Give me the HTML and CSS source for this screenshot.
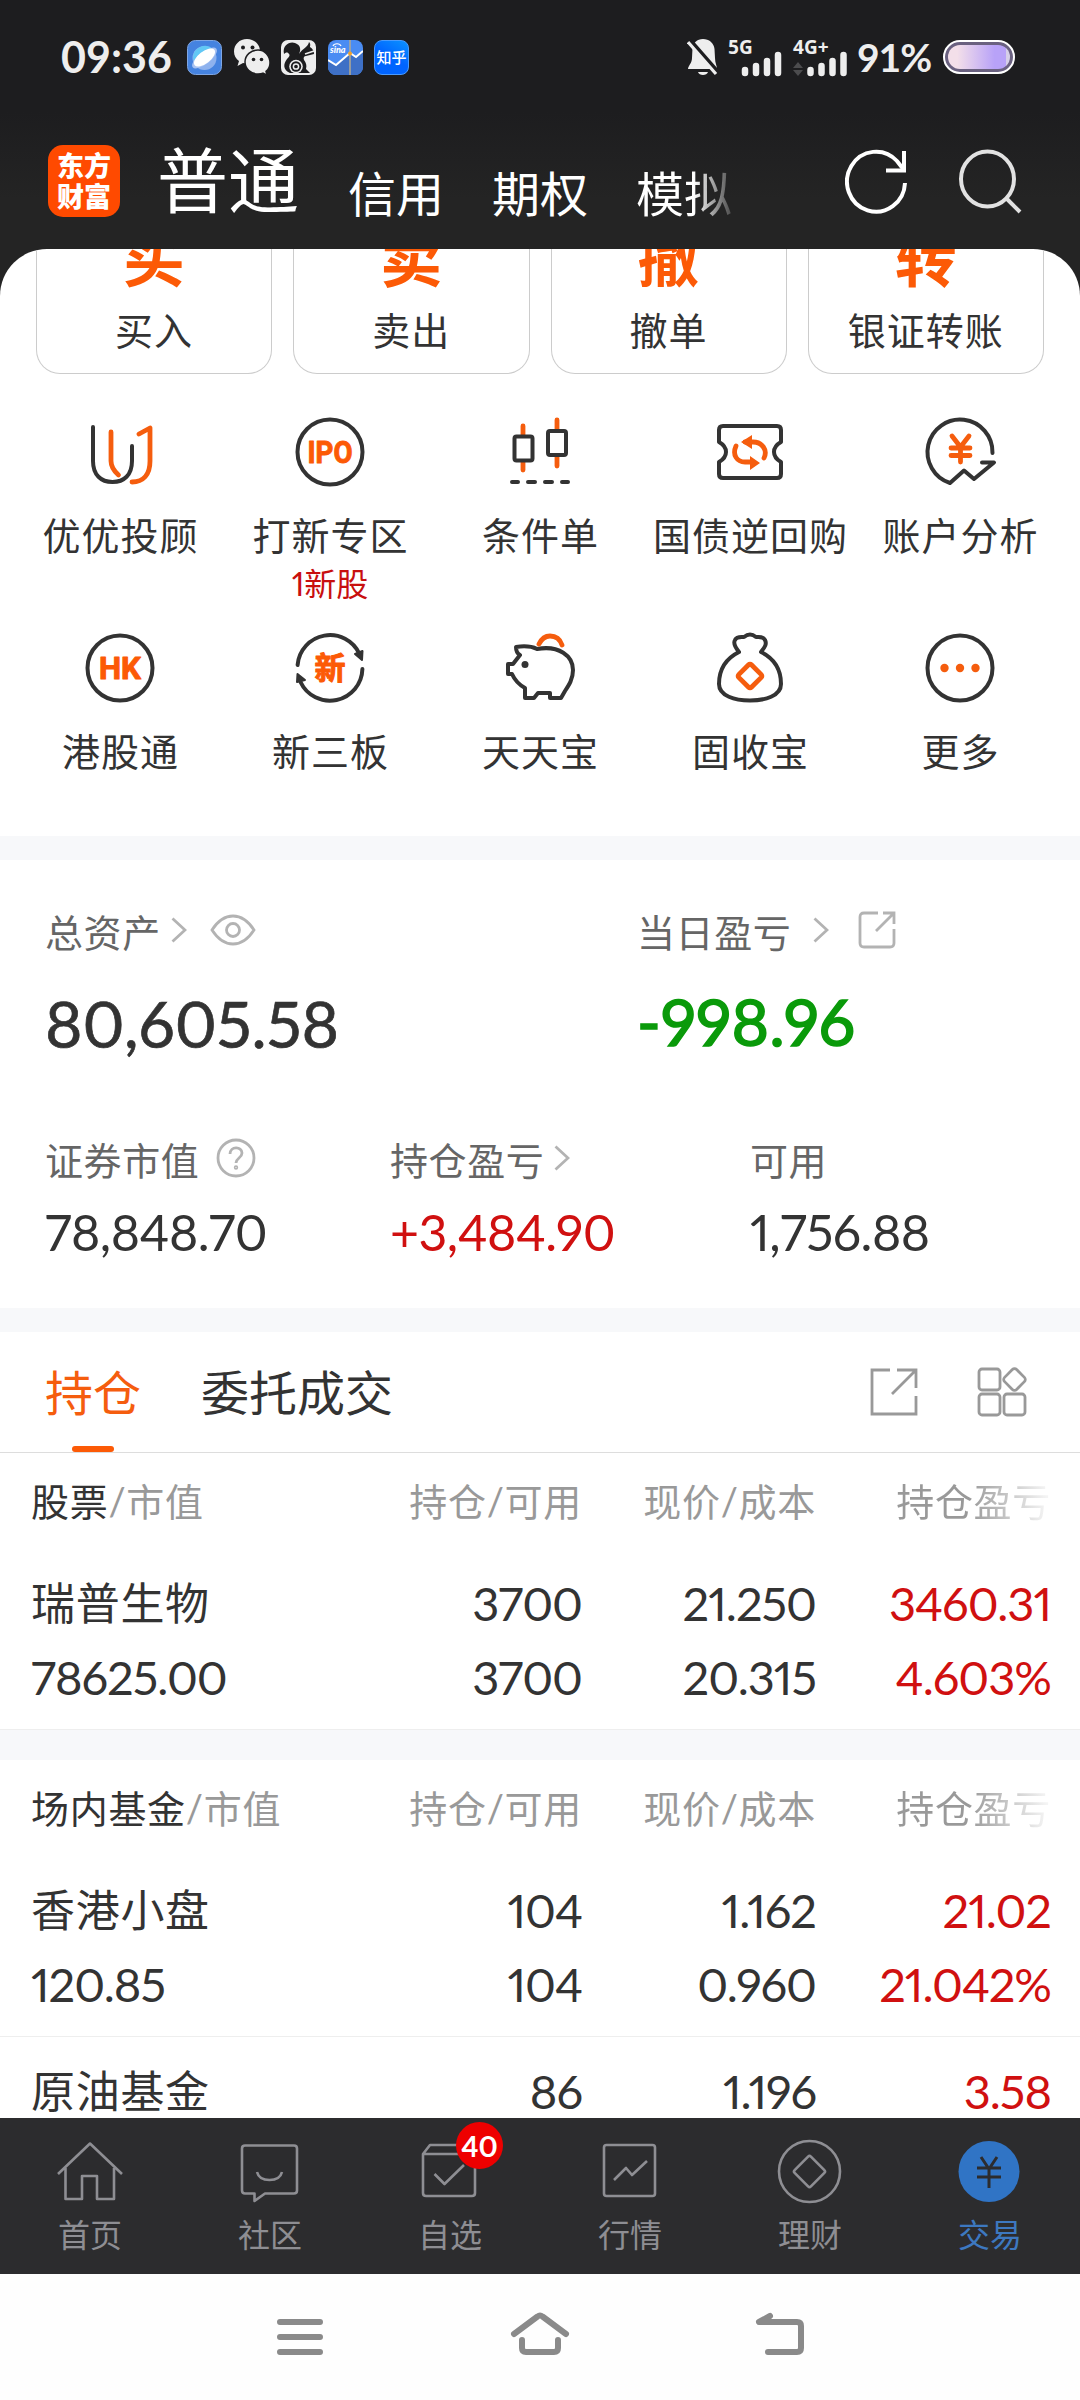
FILE: index.html
```
<!DOCTYPE html>
<html lang="zh-CN">
<head>
    <meta charset="UTF-8">
    <meta name="viewport" content="width=device-width, initial-scale=1.0">
    <title>交易 - 普通</title>
    <link rel="stylesheet" href="styles.css">
</head>
<body>
    <div class="phone">
        <header class="top">
            <div class="status">
                <span class="time">09:36</span>
                <div class="apps">
                    <svg width="35" height="35" viewBox="0 0 35 35">
                        <rect x=".5" y=".5" width="34" height="34" rx="8" fill="#4583e0" stroke="#7fa6e3"/>
                        <circle cx="17.5" cy="18" r="12" fill="#8eb2ee"/>
                        <path d="M6 18a12 12 0 0 1 20-9L8 25z" fill="#62c8f5"/>
                        <ellipse cx="17.5" cy="18" rx="15" ry="6" transform="rotate(-38 17.5 18)" fill="#a9c3f2"/>
                        <ellipse cx="17.5" cy="17.5" rx="12.5" ry="6" transform="rotate(-38 17.5 17.5)" fill="#fff"/>
                    </svg>
                    <svg width="36" height="36" viewBox="0 0 36 36">
                        <path d="M13 0C5.500 0 0 5.500 0 12.500c0 4 2 7.500 5 9.500l-1.500 5 5.500-3c8 2 17-3 17-11.500C26 5.500 20.500 0 13 0z" fill="#eee"/>
                        <path d="M24 11c-7 0-13 5-13 12s6 12 13 12c2 0 3.500 0 5-.8l4 2-1-3.800c2.500-2 4-5 4-8.400C36 16.500 30.500 11 24 11z" fill="#eee" stroke="#1d1d1f" stroke-width="1.500"/>
                        <g fill="#1d1d1f"><circle cx="9" cy="8.500" r="2"/><circle cx="18.500" cy="8.500" r="2"/><circle cx="19.500" cy="20.500" r="1.800"/><circle cx="27.500" cy="20.500" r="1.800"/></g>
                    </svg>
                    <svg width="35" height="35" viewBox="0 0 35 35">
                        <rect width="35" height="35" rx="7" fill="#eee"/>
                        <path d="M3 14C1 5 9 1 14 3c6 2 6 7 4 11 4-6 9-7 10-12 2 2 1 4 1 5 3 2 4 4 4 7l-8 2c-2 0-3 2-2 4 2 3 3 5 2 9l4 4H9C2 30 2 24 6 19c2-2 4-4 1-6-1-1-3 0-4 1z" fill="#1d1d1f"/>
                        <circle cx="15" cy="26.500" r="6.800" fill="#eee"/>
                        <circle cx="15" cy="26.500" r="5.200" fill="#1d1d1f"/>
                        <circle cx="15" cy="26.500" r="2.600" fill="none" stroke="#eee" stroke-width="1.500"/>
                        <path d="M24 14l9-3" fill="none" stroke="#eee" stroke-width="1.500"/>
                    </svg>
                    <svg width="35" height="35" viewBox="0 0 35 35">
                        <rect width="35" height="35" rx="8" fill="#4a8cf3"/>
                        <path d="M0 20l8 5L22 13l6 4 7-6v16a8 8 0 0 1-8 8H8a8 8 0 0 1-8-8z" fill="#3e70c6"/>
                        <path d="M0 20l8 5L22 13l6 4 7-6" fill="none" stroke="#fff" stroke-width="2"/>
                        <path d="M22 0v35" stroke="#b5aa91" stroke-width="1.500"/>
                        <circle cx="22" cy="13.500" r="2" fill="#f0a12c"/>
                        <path d="M5 6c1-3 7-3 8 0" fill="none" stroke="#fff" stroke-width="1.200"/>
                        <text x="2" y="13" class="sina">sina</text>
                    </svg>
                    <span class="zhihu">知乎</span>
                </div>
                <div class="signals">
                    <svg width="31" height="37" viewBox="0 0 31 37">
                        <path d="M16 0C10 0 6 4 5.500 9L5 19c0 5-4 8-4 11h29c0-3-2-6-2-11l-.5-9C27 4 22 0 16 0zM11 33h10c-1 4-9 4-10 0z" fill="#eee"/>
                        <path d="M3 1l28 32" stroke="#1d1d1f" stroke-width="4"/>
                        <path d="M1 3l28 32" stroke="#eee" stroke-width="3.200"/>
                    </svg>
                    <svg class="sig" width="55" height="41" viewBox="0 -4 55 41">
                        <text x="0" y="15" class="net">5G</text>
                        <path d="M17 31v3M28 27v7M39 22v12M50 16v18" stroke="#eee" stroke-width="6.500" stroke-linecap="round"/>
                    </svg>
                    <svg class="sig" width="55" height="41" viewBox="0 -4 55 41">
                        <text x="0" y="15" class="net">4G+</text>
                        <path d="M0 29l5-6 5 6zM0 31l5 6 5-6z" fill="#4c4c4e"/>
                        <path d="M17.500 31v3M28.500 27v7M39.500 22v12M50.500 16v18" stroke="#eee" stroke-width="6.500" stroke-linecap="round"/>
                    </svg>
                    <span class="percent">91%</span>
                    <div class="battery"><div class="level"></div></div>
                </div>
            </div>
            <nav class="accounts">
                <div class="logo">东方<br>财富</div>
                <div class="account-tabs">
                    <span class="current">普通</span>
                    <span>信用</span>
                    <span>期权</span>
                    <span class="fading">模拟</span>
                </div>
                <svg class="refresh" width="64" height="66" viewBox="0 0 64 66" fill="none" stroke="#fff" stroke-width="4">
                    <path d="M60 35a29 30 0 1 1-8-22l7 9"/>
                    <path d="M59 3v19.500H41"/>
                </svg>
                <svg width="64" height="66" viewBox="0 0 64 66" fill="none" stroke="#e2e2e2" stroke-width="4">
                    <ellipse cx="29.500" cy="31" rx="26.500" ry="27.500"/>
                    <path d="M48 50l14 14"/>
                </svg>
            </nav>
        </header>

        <main class="content">
            <section class="cards">
                <div class="card"><b>买</b><span>买入</span></div>
                <div class="card"><b>卖</b><span>卖出</span></div>
                <div class="card"><b>撤</b><span>撤单</span></div>
                <div class="card"><b>转</b><span>银证转账</span></div>
            </section>

            <section class="menu">
                <div class="menu-item">
                    <svg class="icon" viewBox="0 0 80 80">
                        <path d="M13 15v34c0 14 8 21 19.500 21S52 63 52 49V34"/>
                        <path class="o" d="M31 20v29c0 6 3 10 7.500 14M59 22l11-6v33c0 14-7 21-18 21"/>
                    </svg>
                    <span>优优投顾</span>
                </div>
                <div class="menu-item">
                    <svg class="icon" viewBox="0 0 80 80">
                        <circle cx="40" cy="40" r="32.500"/>
                        <text x="17.500" y="51" textLength="45" lengthAdjust="spacingAndGlyphs" class="mark">IPO</text>
                    </svg>
                    <span>打新专区</span>
                    <em>1新股</em>
                </div>
                <div class="menu-item">
                    <svg class="icon" viewBox="0 0 80 80">
                        <path class="o" d="M23 14v9M23 50v8M57 8v9M57 45v9"/>
                        <rect x="14.500" y="24.500" width="18" height="24" rx="2"/>
                        <rect x="48" y="19" width="18" height="24" rx="2"/>
                        <path d="M12 70h6M28 70h7M45 70h7M62 70h6"/>
                    </svg>
                    <span>条件单</span>
                </div>
                <div class="menu-item">
                    <svg class="icon" viewBox="0 0 80 80">
                        <path d="M9 18q0-4 4-4h54q4 0 4 4v12q-7 4-7 10t7 10v12q0 4-4 4H13q-4 0-4-4V50q7-4 7-10t-7-10z"/>
                        <path class="o" d="M26 34c-4 9 1 16 9 16h6M35 30h8c9 0 15 8 11 16"/>
                        <path class="of" d="M31 30l11-7v14zM50 51l-10-7v14z"/>
                    </svg>
                    <span>国债逆回购</span>
                </div>
                <div class="menu-item">
                    <svg class="icon" viewBox="0 0 80 80">
                        <path d="M72.500 41A32.500 32.500 0 1 0 30 71l14-12.500L54 67l20-16.500H62"/>
                        <path class="o" d="M32 24l8.500 11L49 24M31 36h19M31 43.500h19M40.500 35v15"/>
                    </svg>
                    <span>账户分析</span>
                </div>
                <div class="menu-item">
                    <svg class="icon" viewBox="0 0 80 80">
                        <circle cx="40" cy="40" r="32.500"/>
                        <text x="19" y="51" textLength="42" lengthAdjust="spacingAndGlyphs" class="mark">HK</text>
                    </svg>
                    <span>港股通</span>
                </div>
                <div class="menu-item">
                    <svg class="icon" viewBox="0 0 80 80">
                        <path d="M7.600 37A32.500 32.500 0 0 1 69.500 26M72.400 41A32.500 32.500 0 0 1 10.500 54"/>
                        <path class="df" d="M65 26l7.500-3-.5 9zM7.500 46l7.500 6-8 2z" stroke-width="2"/>
                        <text x="24.500" y="51" class="mark xin">新</text>
                    </svg>
                    <span>新三板</span>
                </div>
                <div class="menu-item">
                    <svg class="icon" viewBox="0 0 80 80">
                        <path d="M16 19q13-2 21 2c22-4 36 7 36 21 0 9-4 15-8 21l-4 7H50v-5H38l-4 5H25V60q-9-5-13-14H8V36h5l7-9q-4-2-4-8z"/>
                        <circle cx="25" cy="36.500" r="3.500" class="df" stroke="none"/>
                        <path class="o" d="M39 16q4-8 11-8 9 0 12 9"/>
                    </svg>
                    <span>天天宝</span>
                </div>
                <div class="menu-item">
                    <svg class="icon" viewBox="0 0 80 80">
                        <path d="M29 24c-4-5-6-9-4-12 2-4 6-3 9-3q6-5 12 0c3 0 7-1 9 3s0 7-4 12c14 7 20 19 20 32 0 12-16 16.500-31 16.500S9 68 9 56c0-13 6-25 20-32z"/>
                        <rect class="o" x="31" y="39" width="18" height="18" rx="2" transform="rotate(45 40 48)"/>
                    </svg>
                    <span>固收宝</span>
                </div>
                <div class="menu-item">
                    <svg class="icon" viewBox="0 0 80 80">
                        <circle cx="40" cy="40" r="32.500"/>
                        <g class="of"><circle cx="24.500" cy="40" r="4.200"/><circle cx="40" cy="40" r="4.200"/><circle cx="55.500" cy="40" r="4.200"/></g>
                    </svg>
                    <span>更多</span>
                </div>
            </section>

            <section class="assets">
                <div class="asset-row main-row">
                    <div>
                        <div class="label">总资产
                            <svg class="arrow" width="16" height="26" viewBox="0 0 16 26"><path d="M1.500 1.500L14 13 1.500 24.500"/></svg>
                            <svg class="eye" width="46" height="32" viewBox="0 0 46 32"><path d="M2 16Q11 2 23 2t21 14Q35 30 23 30T2 16z"/><circle cx="23" cy="16" r="6.500"/></svg>
                        </div>
                        <div class="big">80,605.58</div>
                    </div>
                    <div>
                        <div class="label">当日盈亏
                            <svg class="arrow far" width="16" height="26" viewBox="0 0 16 26"><path d="M1.500 1.500L14 13 1.500 24.500"/></svg>
                            <svg class="share" width="38" height="38" viewBox="0 0 38 38"><path d="M20 2H6Q2 2 2 6v26q0 4 4 4h26q4 0 4-4V18M25 2h11v11M36 2L18 20"/></svg>
                        </div>
                        <div class="big green">-998.96</div>
                    </div>
                </div>
                <div class="asset-row sub-row">
                    <div>
                        <div class="label">证券市值
                            <svg class="help" width="40" height="40" viewBox="0 0 40 40"><circle cx="20" cy="20" r="18"/><path d="M14 16c0-8 12-8 12-1 0 5-6 5-6 10"/><circle cx="20" cy="29.500" r=".8"/></svg>
                        </div>
                        <div class="mid">78,848.70</div>
                    </div>
                    <div>
                        <div class="label">持仓盈亏
                            <svg class="arrow" width="16" height="26" viewBox="0 0 16 26"><path d="M1.500 1.500L14 13 1.500 24.500"/></svg>
                        </div>
                        <div class="mid red">+3,484.90</div>
                    </div>
                    <div>
                        <div class="label">可用</div>
                        <div class="mid">1,756.88</div>
                    </div>
                </div>
            </section>

            <section class="tabs">
                <span class="tab active">持仓</span>
                <span class="tab">委托成交</span>
                <svg class="tab-share" width="48" height="48" viewBox="0 0 48 48"><path d="M20 2H2v44h44V28M27 2h19v18M46 2L22 26"/></svg>
                <svg width="50" height="50" viewBox="0 0 50 50"><rect x="2" y="2" width="21" height="21" rx="3"/><rect x="2" y="27" width="21" height="21" rx="3"/><rect x="27" y="27" width="21" height="21" rx="3"/><rect x="29" y="4" width="17" height="17" rx="3" transform="rotate(45 37.500 12.500)"/></svg>
            </section>

            <section class="holdings">
                <div class="row head">
                    <span><i>股票</i>/市值</span><span>持仓/可用</span><span>现价/成本</span><span class="cut">持仓盈亏</span>
                </div>
                <div class="row stock">
                    <span class="name">瑞普生物</span><span>3700</span><span>21.250</span><span class="red">3460.31</span>
                    <span>78625.00</span><span>3700</span><span>20.315</span><span class="red">4.603%</span>
                </div>
            </section>

            <section class="holdings">
                <div class="row head">
                    <span><i>场内基金</i>/市值</span><span>持仓/可用</span><span>现价/成本</span><span class="cut">持仓盈亏</span>
                </div>
                <div class="row stock">
                    <span class="name">香港小盘</span><span>104</span><span>1.162</span><span class="red">21.02</span>
                    <span>120.85</span><span>104</span><span>0.960</span><span class="red">21.042%</span>
                </div>
                <div class="row stock">
                    <span class="name">原油基金</span><span>86</span><span>1.196</span><span class="red">3.58</span>
                </div>
            </section>
        </main>

        <nav class="bottom">
            <div class="nav-item">
                <svg viewBox="0 0 72 72"><path d="M4 38L36 7.500 68 38M11.500 32v31H28V40h15v23h17V32"/></svg>
                <span>首页</span>
            </div>
            <div class="nav-item">
                <svg viewBox="0 0 72 72"><path d="M11 9.500h49q3 0 3 3v42q0 3-3 3H31L20.500 65v-7.500H11q-3 0-3-3v-42q0-3 3-3zM23 36q2 8 12.500 8T48 36"/></svg>
                <span>社区</span>
            </div>
            <div class="nav-item">
                <svg viewBox="0 0 72 72"><path d="M9 18v39q0 3 3 3h46q3 0 3-3V18zM9 18l7-9h38l7 9M20.500 38l10 10L50 29"/></svg>
                <span>自选</span>
                <em class="badge">40</em>
            </div>
            <div class="nav-item">
                <svg viewBox="0 0 72 72"><rect x="10" y="9" width="51" height="51" rx="2.500"/><path d="M20 44l12-12 6 7 15-14"/></svg>
                <span>行情</span>
            </div>
            <div class="nav-item">
                <svg viewBox="0 0 72 72"><circle cx="35.500" cy="35.500" r="30.500"/><rect x="24" y="24" width="23" height="23" rx="2" transform="rotate(45 35.500 35.500)"/></svg>
                <span>理财</span>
            </div>
            <div class="nav-item on">
                <svg viewBox="0 0 72 72"><circle cx="35" cy="35.500" r="30.500"/><path d="M27 21l8 12 8-12M23 32h24M23 41h24M35 32v20"/></svg>
                <span>交易</span>
            </div>
        </nav>

        <footer class="system">
            <svg width="60" height="60" viewBox="0 0 60 60"><path d="M10 18h40M10 33h40M10 48h40"/></svg>
            <svg width="60" height="60" viewBox="0 0 60 60"><path d="M4 30L27.500 12.500q2.500-2 5 0L56 30M12 36v8q0 4 4 4h28q4 0 4-4v-8"/></svg>
            <svg width="60" height="60" viewBox="0 0 60 60"><path d="M20 12L9 18h38q4 0 4 4v22q0 4-4 4H18"/></svg>
        </footer>
    </div>
</body>
</html>
```
FILE: styles.css
```
* {
    margin: 0;
    padding: 0;
    box-sizing: border-box;
}

body {
    font-family: 'Lato', 'Noto Sans CJK SC', sans-serif;
    font-variant-numeric: proportional-nums;
    color: #333;
    background: #fff;
}

em, i {
    font-style: normal;
}

svg {
    display: block;
    flex: none;
}

.phone {
    width: 1080px;
    height: 2400px;
    display: flex;
    flex-direction: column;
    overflow: hidden;
    background: #242424;
}

/* 顶部 */
.top {
    height: 249px;
    flex: none;
    background: linear-gradient(#1d1d1f 45%, #242424 80%);
}

.status {
    display: flex;
    align-items: center;
    height: 114px;
    padding: 0 65px 0 61px;
    color: #eee;
}

.time {
    width: 126px;
    font-size: 43px;
    font-weight: 700;
    font-variant-numeric: tabular-nums;
    line-height: 50px;
}

.apps {
    display: flex;
    align-items: center;
    gap: 11.5px;
}

.sina {
    font-size: 9px;
    font-style: italic;
    font-weight: 900;
    fill: #fff;
}

.zhihu {
    width: 35px;
    height: 35px;
    border-radius: 8px;
    border: 1px solid #4a9bff;
    background: linear-gradient(30deg, #0064ff 50%, #0b93ff);
    color: #fff;
    font-size: 15px;
    font-weight: 500;
    line-height: 33px;
    text-align: center;
}

.signals {
    display: flex;
    align-items: center;
    margin-left: auto;
}

.sig {
    margin: -4px 0 0 10px;
    overflow: visible;
}

.net {
    font-family: 'Noto Sans', sans-serif;
    font-size: 19px;
    font-weight: 700;
    fill: #eee;
}

.percent {
    width: 86px;
    padding-left: 9px;
    font-size: 39px;
    font-weight: 700;
    font-variant-numeric: tabular-nums;
    letter-spacing: -1px;
    line-height: 50px;
    white-space: nowrap;
}

.battery {
    width: 72px;
    height: 34px;
    margin-left: 9px;
    padding: 3px;
    border: 2px solid #fff;
    border-radius: 17px;
    background: #6a6180;
}

.level {
    height: 100%;
    border-radius: 12px;
    background: linear-gradient(90deg, #f3dfe9 15%, #b8a2f8 75%, #b8a2f8 94%, #d6cfe8 94%);
}

.accounts {
    display: flex;
    align-items: center;
    height: 134px;
    padding: 0 57px 0 48px;
    color: #fff;
}

.logo {
    width: 72px;
    height: 72px;
    padding-top: 5px;
    border-radius: 15px;
    background: #ff4a00;
    font-size: 27px;
    font-weight: 900;
    line-height: 31px;
    text-align: center;
}

.account-tabs {
    display: flex;
    align-items: flex-end;
    width: 725px;
    margin-top: -3px;
    padding-left: 37px;
    font-size: 48px;
    line-height: 56px;
}

.account-tabs span {
    margin-right: 48px;
}

.account-tabs .current {
    font-size: 71px;
    line-height: 84px;
    margin-right: 49px;
}

.account-tabs .fading {
    margin-right: 0;
    background: linear-gradient(90deg, #fff 60%, #4a4a4a);
    -webkit-background-clip: text;
    background-clip: text;
    color: transparent;
}

.refresh {
    margin-right: 49px;
}

/* 主体 */
.content {
    height: 1869px;
    flex: none;
    overflow: hidden;
    border-radius: 47px 47px 0 0;
    background: #fff;
}

.cards {
    display: grid;
    grid-template-columns: repeat(4, 1fr);
    gap: 21px;
    padding: 0 36px;
}

.card {
    display: flex;
    flex-direction: column;
    align-items: center;
    justify-content: flex-end;
    height: 125px;
    padding-bottom: 17px;
    overflow: hidden;
    border: 1px solid #ccc;
    border-top: none;
    border-radius: 0 0 24px 24px;
}

.card b {
    margin-bottom: 15px;
    color: #fc5a06;
    font-size: 62px;
    line-height: 62px;
}

.card span {
    font-size: 38px;
    line-height: 52px;
    letter-spacing: 1px;
}

.menu {
    display: grid;
    grid-template-columns: repeat(5, 210px);
    grid-auto-rows: 216px;
    height: 462px;
    padding: 38px 15px 0;
}

.menu-item {
    display: flex;
    flex-direction: column;
    align-items: center;
    white-space: nowrap;
}

.menu-item span {
    margin-top: 18px;
    padding-left: 1px;
    font-size: 38px;
    line-height: 50px;
    letter-spacing: 1px;
}

.menu-item em {
    margin-top: 1px;
    color: #c80f0f;
    font-size: 32px;
    line-height: 46px;
}

.icon {
    width: 80px;
    height: 80px;
    fill: none;
    stroke: #333;
    stroke-width: 4;
    stroke-linecap: round;
    stroke-linejoin: round;
}

.icon .o {
    stroke: #f55d0e;
    stroke-width: 4.8;
}

.icon .of {
    fill: #f55d0e;
    stroke: none;
}

.icon .df {
    fill: #333;
}

.mark {
    font-family: 'Roboto', sans-serif;
    font-size: 32px;
    font-weight: 700;
    fill: #fc5a06;
    stroke: #fc5a06;
    stroke-width: 1;
}

.mark.xin {
    font-family: 'Noto Sans CJK SC', sans-serif;
    font-size: 31px;
}

/* 资产 */
.assets {
    height: 472px;
    padding: 45px 45px 0;
    border-top: 24px solid #f7f8fa;
}

.asset-row {
    display: grid;
}

.main-row {
    grid-template-columns: 592px 1fr;
    margin-bottom: 69px;
}

.sub-row {
    grid-template-columns: 345px 360px 1fr;
}

.label {
    display: flex;
    align-items: center;
    height: 50px;
    color: #666;
    font-size: 38px;
    letter-spacing: .6px;
}

.label svg {
    fill: none;
    stroke: #b3b3b3;
    stroke-width: 2.8;
}

.arrow {
    margin-left: 10px;
}

.arrow.far {
    margin-left: 22px;
}

.eye {
    margin-left: 23px;
}

.share {
    margin-left: 29px;
}

.help {
    margin-left: 17px;
}

.big {
    margin-top: 29px;
    font-size: 64px;
    line-height: 80px;
    -webkit-text-stroke: .7px currentColor;
}

.mid {
    margin-top: 19px;
    font-size: 50px;
    line-height: 60px;
    letter-spacing: -.5px;
}

.green {
    position: relative;
    top: -2px;
    color: #0a9a0a;
    letter-spacing: .3px;
    -webkit-text-stroke: 1.6px currentColor;
}

.red {
    color: #d01010;
}

/* 标签 */
.tabs {
    display: flex;
    align-items: center;
    height: 145px;
    padding: 0 53px 0 45px;
    border-top: 24px solid #f7f8fa;
    border-bottom: 1px solid #ddd;
    font-size: 48px;
}

.tab {
    position: relative;
    margin-right: 60px;
    padding-top: 2px;
    line-height: 118px;
}

.tab.active {
    color: #f55d0e;
}

.tab.active::after {
    content: '';
    position: absolute;
    left: 27px;
    bottom: 0;
    width: 42px;
    height: 6px;
    border-radius: 3px;
    background: #fc5a06;
}

.tabs svg {
    fill: none;
    stroke: #999;
    stroke-width: 2.8;
}

.tab-share {
    margin-left: auto;
    margin-right: 59px;
}

/* 持仓列表 */
.holdings + .holdings {
    border-top: 30px solid #f7f8fa;
}

.row {
    display: grid;
    grid-template-columns: 317px 234px 234px 235px;
    padding: 0 29px 0 31px;
    text-align: right;
}

.row span:nth-child(4n+1) {
    text-align: left;
}

.head {
    height: 96px;
    color: #999;
    font-size: 38px;
    line-height: 96px;
    letter-spacing: .7px;
    white-space: nowrap;
}

.head i {
    color: #333;
}

.head .cut {
    background: linear-gradient(90deg, #999 65%, #f4f4f4 98%);
    -webkit-background-clip: text;
    background-clip: text;
    color: transparent;
}

.stock {
    height: 181px;
    padding-top: 17px;
    border-bottom: 1px solid #eee;
    grid-auto-rows: 74px;
    font-size: 47px;
    line-height: 74px;
    letter-spacing: -1px;
}

.stock .name {
    font-size: 44px;
    letter-spacing: .7px;
}

/* 底部导航 */
.bottom {
    display: grid;
    grid-template-columns: repeat(6, 1fr);
    height: 156px;
    flex: none;
    background: #2c2c2e;
    color: #8e8e93;
}

.nav-item {
    position: relative;
    display: flex;
    flex-direction: column;
    align-items: center;
    padding-top: 18px;
    font-size: 32px;
}

.nav-item svg {
    width: 72px;
    height: 72px;
    fill: none;
    stroke: #8e8e93;
    stroke-width: 2.6;
    stroke-linejoin: round;
}

.nav-item span {
    margin-top: 6px;
    line-height: 42px;
}

.badge {
    position: absolute;
    left: 96px;
    top: 4px;
    width: 47px;
    height: 47px;
    border-radius: 50%;
    background: #ee0000;
    color: #fff;
    font-size: 29px;
    font-weight: 700;
    line-height: 47px;
    text-align: center;
}

.on {
    color: #3d78c0;
}

.on circle {
    fill: #3074c5;
    stroke: none;
}

.on path {
    stroke: #2c2c2e;
    stroke-width: 3;
}

/* 系统按键 */
.system {
    display: flex;
    justify-content: center;
    gap: 180px;
    height: 126px;
    flex: none;
    padding-top: 30px;
    background: #fefefe;
}

.system svg {
    fill: none;
    stroke: #8a8a8a;
    stroke-width: 6;
    stroke-linecap: round;
    stroke-linejoin: round;
}
```
